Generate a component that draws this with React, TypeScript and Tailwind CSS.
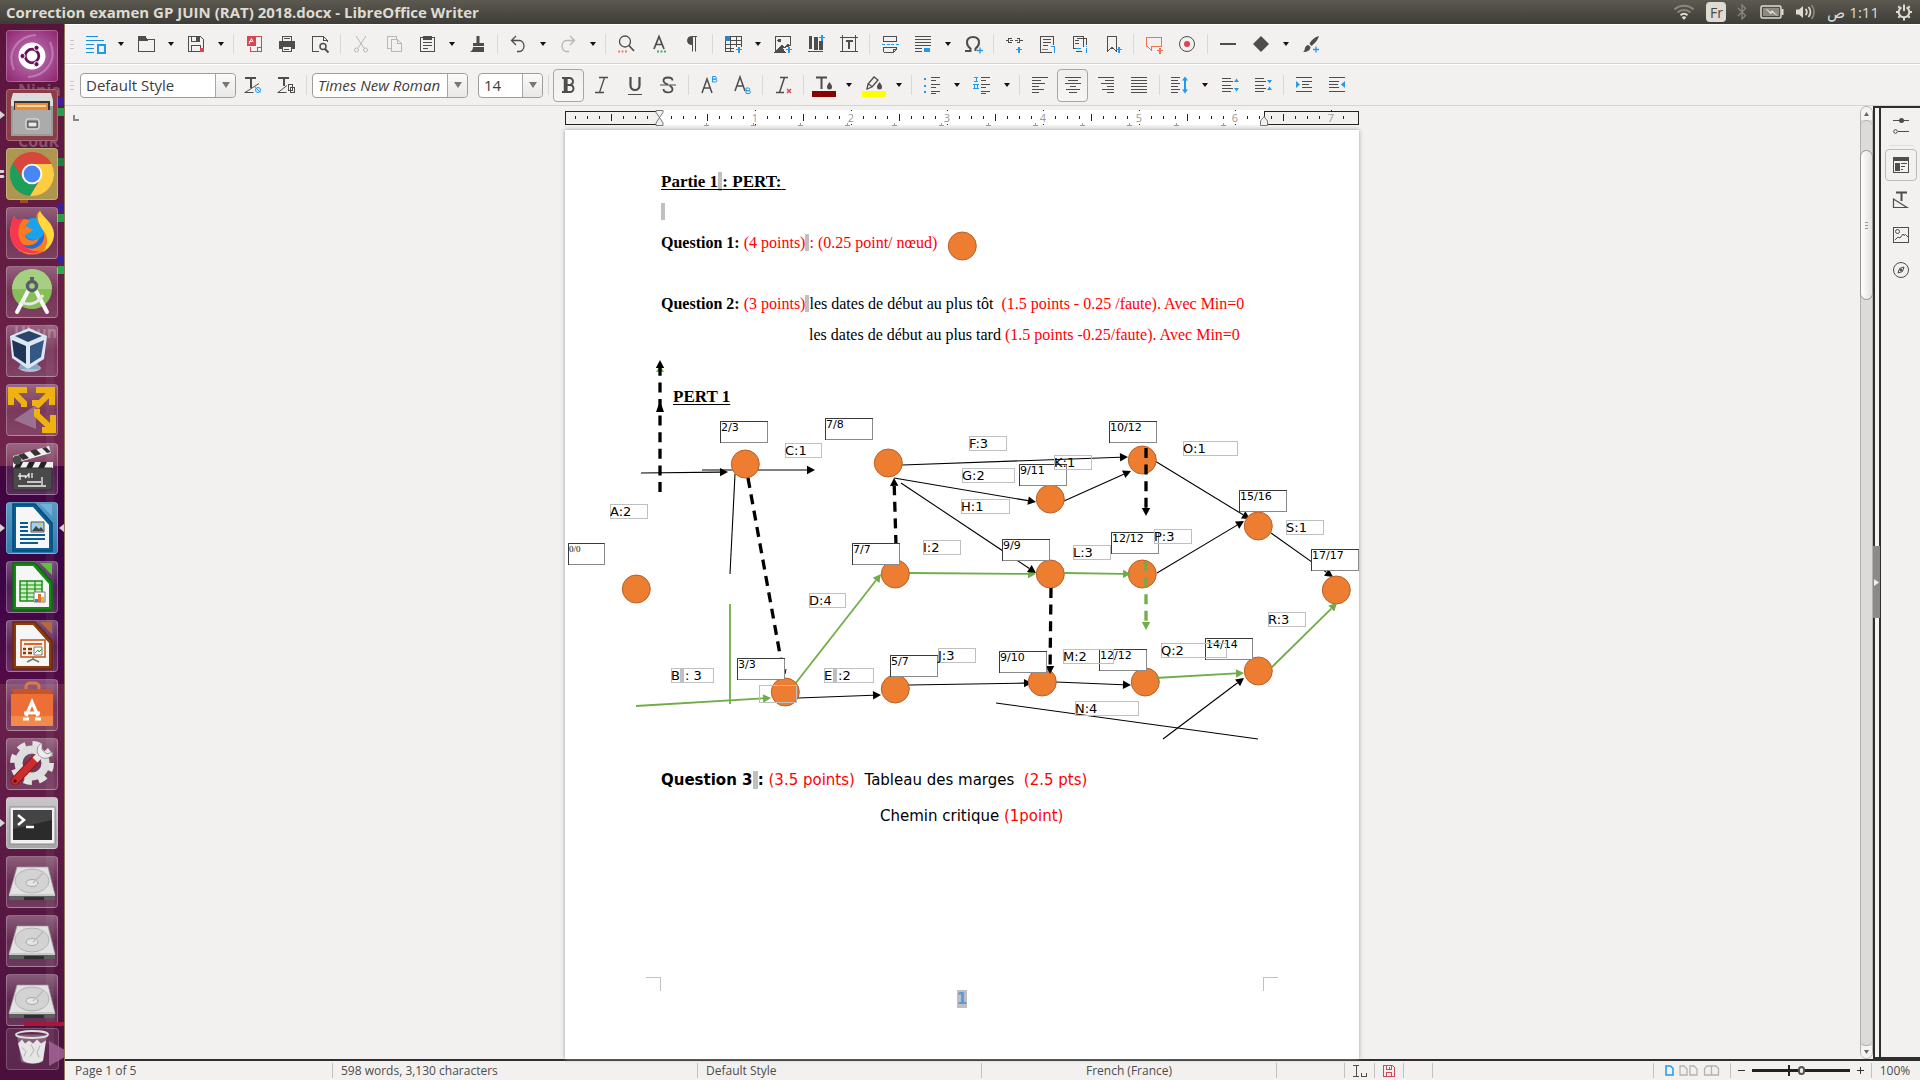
import React from "react";

const INK = "#4d4d4d";
const BLUE = "#1e9bf0";
const RED = "#da4453";

/* ---------- toolbar building blocks ---------- */

function Glyph({ children, soft = false }: { children: React.ReactNode; soft?: boolean }) {
  return (
    <svg
      width="24"
      height="24"
      viewBox="0 0 24 24"
      fill="none"
      stroke={INK}
      shapeRendering={soft ? "auto" : "crispEdges"}
      aria-hidden="true"
    >
      {children}
    </svg>
  );
}

function Tool({
  label,
  children,
  soft,
  active,
  disabled,
}: {
  label: string;
  children: React.ReactNode;
  soft?: boolean;
  active?: boolean;
  disabled?: boolean;
}) {
  return (
    <button
      type="button"
      aria-label={label}
      disabled={disabled}
      className="flex h-9 w-[33px] shrink-0 items-center justify-center disabled:opacity-35"
    >
      <span
        className={
          active
            ? "flex h-[33px] w-[31px] items-center justify-center rounded border border-[#a8a6a3] bg-linear-to-b from-[#f0efed] to-[#f7f6f5]"
            : "flex h-[33px] w-[31px] items-center justify-center"
        }
      >
        <Glyph soft={soft}>{children}</Glyph>
      </span>
    </button>
  );
}

function Drop({ label }: { label: string }) {
  return (
    <button type="button" aria-label={label} className="flex h-9 w-[17px] shrink-0 items-center justify-center">
      <svg width="6" height="4" viewBox="0 0 6 4" aria-hidden="true">
        <path d="M0 0h6L3 4z" fill="#111" />
      </svg>
    </button>
  );
}

function Sep() {
  return (
    <div className="flex w-2 shrink-0 justify-center">
      <div className="h-5 w-px bg-[#dad8d6]" />
    </div>
  );
}

function Grip() {
  return (
    <div className="flex w-[14px] shrink-0 flex-col items-center gap-[3px]">
      <div className="h-px w-1 bg-[#c9c7c4]" />
      <div className="h-px w-1 bg-[#c9c7c4]" />
      <div className="h-px w-1 bg-[#c9c7c4]" />
    </div>
  );
}

function Combo({ label, value, size, italic }: { label: string; value: string; size: string; italic?: boolean }) {
  return (
    <div className={"relative flex h-[25px] shrink-0 rounded border border-[#9f9d9a] bg-white " + size}>
      <select
        aria-label={label}
        defaultValue={value}
        className={
          "h-full w-full appearance-none rounded bg-transparent pl-[5px] text-[15px] text-[#3c3c3c] outline-none " +
          (italic ? "italic" : "")
        }
      >
        <option>{value}</option>
      </select>
      <div className="pointer-events-none absolute inset-y-0 right-0 flex w-5 items-center justify-center rounded-r border-l border-[#a9a7a4] bg-linear-to-b from-[#fbfafa] to-[#eae8e6]">
        <svg width="8" height="6" viewBox="0 0 8 6" aria-hidden="true">
          <path d="M0 0h8L4 6z" fill="#777" />
        </svg>
      </div>
    </div>
  );
}

/* ---------- top panel ---------- */

function TopBar() {
  return (
    <header className="flex h-6 shrink-0 items-center bg-linear-to-b from-[#5c5a50] to-[#3d3c37] pl-[6px] text-[#dfdbd2]">
      <h1 className="text-[15px] leading-6 font-bold">Correction examen GP JUIN (RAT) 2018.docx - LibreOffice Writer</h1>
      <div className="ml-auto flex items-center pr-[7px]">
        <svg width="22" height="18" viewBox="0 0 22 18" fill="none" strokeWidth="2" aria-label="Wi-Fi">
          <path d="M1.500 6.500a14 14 0 0 1 19 0" stroke="#8b887f" />
          <path d="M4.500 9.500a9.500 9.500 0 0 1 13 0" stroke="#8b887f" />
          <path d="M7.500 12.300a5 5 0 0 1 7 0" stroke="#dfdbd2" />
          <path d="M8.700 14.300a3.500 3.500 0 0 1 4.600 0L11 17z" fill="#dfdbd2" />
        </svg>
        <span className="ml-[11px] flex h-5 w-5 items-center justify-center rounded-sm bg-[#dfdbd2] text-[14px] text-[#4a4843]">Fr</span>
        <svg className="ml-[11px]" width="10" height="18" viewBox="0 0 10 18" fill="none" stroke="#89867d" strokeWidth="1.300" aria-label="Bluetooth">
          <path d="M1 5l7.500 7.500L5 16V2l3.500 3.500L1 13" />
        </svg>
        <svg className="ml-[13px]" width="24" height="14" viewBox="0 0 24 14" aria-label="Battery">
          <rect x="1" y="1" width="20" height="12" rx="1.500" fill="none" stroke="#dfdbd2" strokeWidth="1.500" />
          <rect x="21.500" y="4" width="2" height="6" fill="#dfdbd2" />
          <rect x="3" y="3" width="16" height="8" fill="#8d8a80" />
          <path d="M6 4l5 3.500 1-2 5 5-5-3.500-1 2z" fill="#f4f1ea" stroke="#f4f1ea" strokeWidth=".4" />
        </svg>
        <svg className="ml-[11px]" width="21" height="18" viewBox="0 0 21 18" fill="none" strokeWidth="1.800" aria-label="Volume">
          <path d="M1 6.500h3l4-3.500v12l-4-3.500H1z" fill="#dfdbd2" />
          <path d="M10.500 6a4 4 0 0 1 0 6M13.500 4a7.500 7.500 0 0 1 0 10" stroke="#dfdbd2" />
          <path d="M16.500 2a11 11 0 0 1 0 14" stroke="#87847b" />
        </svg>
        <time dir="rtl" className="ml-[11px] text-[15px] leading-6">
          1:11 ص
        </time>
        <svg className="ml-4" width="18" height="18" viewBox="0 0 18 18" fill="none" stroke="#dfdbd2" aria-label="Session">
          <path d="M6.500 4.300a5.300 5.300 0 1 0 5 0" strokeWidth="2" />
          <path d="M9 1.500V8" strokeWidth="2" />
          <path d="M1 9h2M15 9h2M3.300 14.700l1.400-1.400M14.700 14.700l-1.400-1.400M9 15v2.500M3.300 3.300l1.500 1.500M14.700 3.300l-1.500 1.500" strokeWidth="2" />
        </svg>
      </div>
    </header>
  );
}

/* ---------- launcher ---------- */

function Tile({
  name,
  tone,
  left,
  right,
  children,
}: {
  name: string;
  tone: string;
  left?: "one" | "two";
  right?: boolean;
  children: React.ReactNode;
}) {
  return (
    <div className="relative">
      <button
        type="button"
        aria-label={name}
        className={"block h-[52px] w-[52px] overflow-hidden rounded border border-white/25 " + tone}
      >
        <svg width="50" height="50" viewBox="1 1 50 50" aria-hidden="true">
          {children}
        </svg>
      </button>
      {left === "one" && (
        <svg className="absolute top-[22px] -left-[6px]" width="5" height="8" viewBox="0 0 5 8" aria-hidden="true">
          <path d="M0 0l5 4-5 4z" fill="#d8d4d6" />
        </svg>
      )}
      {left === "two" && (
        <svg className="absolute top-[22px] -left-[6px]" width="5" height="8" viewBox="0 0 5 8" aria-hidden="true">
          <path d="M0 0h3.500l1 1.500-1 1.500H0zM0 5h3.500l1 1.500-1 1.500H0z" fill="#d8d4d6" />
        </svg>
      )}
      {right && (
        <svg className="absolute top-[22px] -right-[6px]" width="5" height="8" viewBox="0 0 5 8" aria-hidden="true">
          <path d="M5 0L0 4l5 4z" fill="#d8d4d6" />
        </svg>
      )}
    </div>
  );
}

const GLASS = "bg-linear-to-b from-white/30 via-white/10 to-white/15";

function DocShape({ dark, mid, light }: { dark: string; mid: string; light: string }) {
  return (
    <>
      <path d="M7 2h22l17 19v28H7z" fill={mid} stroke={dark} strokeWidth="1.500" />
      <path d="M10 5h17l16 18v23H10z" fill="#f6f6f6" />
      <path d="M34 2h12v12z" fill={light} />
    </>
  );
}

function Disk() {
  return (
    <>
      <path d="M11 11h31l7 28H3z" fill="#e2e2e2" stroke="#9b9b9b" strokeWidth=".7" />
      <ellipse cx="26" cy="25" rx="17" ry="12" fill="#d3d3d3" stroke="#b4b4b4" />
      <ellipse cx="26" cy="27" rx="6" ry="3.500" fill="#e4e4e4" stroke="#a8a8a8" />
      <path d="M27 27l10-10" stroke="#bbb" strokeWidth="1.500" />
      <path d="M3 38h46v6H3z" fill="#5e5e5e" />
      <path d="M3 38h46v2H3z" fill="#c9c9c9" />
      <path d="M18 41h20v3H18z" fill="#2f2f2f" />
    </>
  );
}

const GHOSTS = [
  { word: "The", place: "top-0 left-4 text-[22px] text-white/20" },
  { word: "Ninja", place: "top-[54px] left-[18px] text-[16px] text-white/25" },
  { word: "CouR", place: "top-[105px] left-[18px] text-[16px] text-white/25" },
  { word: "Ubun", place: "top-[296px] left-[14px] text-[16px] text-white/25" },
];

const STREAKS = [
  "top-[73px] bg-[#3d1f9c]",
  "top-[84px] bg-[#25a04a]",
  "top-[134px] bg-[#257a3f]",
  "top-[180px] bg-[#3d1f9c]",
  "top-[190px] bg-[#25a04a]",
  "top-[232px] bg-[#3d1f9c]",
  "top-[242px] bg-[#2ea84e]",
];

function Launcher() {
  return (
    <nav
      aria-label="Launcher"
      className="relative flex w-[65px] shrink-0 flex-col items-center overflow-hidden bg-linear-to-b from-[#5a143c] via-[#74284f] to-[#4a0f3c] pr-px"
    >
      <div aria-hidden="true" className="absolute inset-0">
        <div className="absolute inset-x-0 top-[442px] h-[218px] bg-linear-to-b from-[#420540] via-[#3b0446] to-[#520b46]" />
        <div className="absolute top-[300px] left-[46px] h-[720px] w-2 bg-white/5" />
        {STREAKS.map((s) => (
          <div key={s} className={"absolute right-0 h-2 w-2 " + s} />
        ))}
        <div className="absolute top-[163px] left-5 h-4 w-2 bg-[#b3661f]/70" />
        <div className="absolute top-[212px] left-[18px] h-4 w-2 bg-[#8c1690]" />
        {GHOSTS.map((g) => (
          <span key={g.word} className={"absolute font-bold " + g.place}>
            {g.word}
          </span>
        ))}
      </div>

      <div className="relative mt-[6px] flex flex-col gap-[7px]">
        <Tile name="Search your computer" tone="bg-radial from-[#c07ab8] to-[#8d2371]">
          <path d="M8 40C0 22 12 6 30 5M44 12c8 18-4 34-22 35" stroke="#cf9bcb" strokeWidth="2" fill="none" opacity=".6" />
          <circle cx="26" cy="26" r="13.500" fill="#fff" />
          <circle cx="26" cy="26" r="6.800" fill="none" stroke="#6d1058" strokeWidth="2.800" />
          <circle cx="16.500" cy="26" r="2.600" fill="#6d1058" stroke="#fff" />
          <circle cx="30.500" cy="17.800" r="2.600" fill="#6d1058" stroke="#fff" />
          <circle cx="30.500" cy="34.200" r="2.600" fill="#6d1058" stroke="#fff" />
        </Tile>
        <Tile name="Files" tone="bg-[#8b3d48]" left="one">
          <path d="M7 4h38l2 7v6H5v-6z" fill="#dcdcdc" />
          <path d="M8 12h36v9H8z" fill="#3b3634" />
          <path d="M9 14h33v7H9z" fill="#e98a35" />
          <path d="M11 16h29v2H11z" fill="#fbd9a8" />
          <path d="M5 17h3v4h36v-4h3v30H5z" fill="#9b9b9b" />
          <path d="M7 21h38v24H7z" fill="#ababab" />
          <rect x="20" y="30" width="13" height="10" rx="2" fill="#8d8d8d" stroke="#eee" />
          <rect x="22" y="33" width="9" height="5" fill="#e8e8e8" stroke="#444" />
        </Tile>
        <Tile name="Google Chrome" tone="bg-[#ad9650]" left="two">
          <circle cx="26" cy="26" r="22" fill="#dd4b3e" />
          <path d="M26 26L7 15a22 22 0 0 0 17 33l9-16z" fill="#1c9f5b" />
          <path d="M26 16h19.600A22 22 0 0 1 24 48l10.500-17z" fill="#ffcd42" />
          <path d="M7 15l10 16 9-15h19.500A22 22 0 0 0 7 15z" fill="#d9463b" />
          <circle cx="26" cy="26" r="10.300" fill="#fff" />
          <circle cx="26" cy="26" r="8.400" fill="#4687f4" />
        </Tile>
        <Tile name="Firefox" tone={GLASS}>
          <circle cx="26" cy="28" r="17" fill="#1d6fd8" />
          <circle cx="28" cy="22" r="11" fill="#1aa3ec" />
          <path d="M8 9c1 3 3 4 5 4 4-2 8-1 11 1l-5 5c4 1 6 4 8 3-1 4-8 4-8 7 2 5 10 6 14 2-2 8-14 10-19 4 5 10 22 9 24-5 1-7-4-10-7-17-2-5 1-8 3-9 3 7 13 11 14 23a22 22 0 0 1-43 5C3 24 5 16 8 9z" fill="#fb7a22" />
          <path d="M8 9c1 3 3 4 5 4 2-1 4-1 5-1-6 5-7 14-4 21 4 9 14 13 22 11-12 6-27 0-31-12C3 24 5 16 8 9z" fill="#f6384e" />
          <path d="M34 4c3 7 13 11 14 23 0 7-4 14-11 18 6-8 5-16 0-22-5-7-7-14-3-19z" fill="#ffd83e" />
        </Tile>
        <Tile name="Android Studio" tone={GLASS}>
          <circle cx="26" cy="23" r="20" fill="#86bf57" />
          <path d="M6 23a20 20 0 0 1 40 0z" fill="#a6cf82" />
          <path d="M22 25L11 46M30 25l11 21" stroke="#f7f7f7" strokeWidth="4" strokeLinecap="round" />
          <path d="M15 36c8 4 16 2 22-7" stroke="#e8e8e8" strokeWidth="3" fill="none" />
          <circle cx="26" cy="20" r="4.500" fill="none" stroke="#57606a" strokeWidth="3.500" />
          <path d="M24 11h4v4h-4z" fill="#57606a" />
        </Tile>
        <Tile name="VirtualBox" tone={GLASS}>
          <ellipse cx="24" cy="43" rx="11" ry="4" fill="#a9bdd6" />
          <path d="M15 38h16l3 6H12z" fill="#8ba3c3" />
          <path d="M4 11L23 3l18 8-3 23-16 10L6 33z" fill="#dbe7f5" />
          <path d="M9 11l14-5 13 5-14 6z" fill="#2c4468" />
          <path d="M6 15l14 6v18L8 31z" fill="#1d3557" />
          <path d="M24 21l14-6-3 17-11 7z" fill="#355785" />
        </Tile>
        <Tile name="VMware" tone={GLASS}>
          <path d="M8 36l22-15v24z" fill="#a888aa" opacity=".7" />
          <path d="M21 6H5v15M6 7l12 12v4M30 6h16v15M46 7L30 23M26 19h8M36 46h11V31M46 45L31 31v-6" fill="none" stroke="#efb310" strokeWidth="6" />
        </Tile>
        <Tile name="OpenShot" tone={GLASS}>
          <path d="M7 13L43 3l2 7L9 20z" fill="#f0f0f0" />
          <path d="M12 12l5 5 6-2-5-5zM24 8l5 5 6-2-5-5zM36 5l5 5 4-1-5-5z" fill="#333" />
          <path d="M7 19h40v6H7z" fill="#f0f0f0" />
          <path d="M11 19h6l-3 6H8zM23 19h6l-3 6h-6zM35 19h6l-3 6h-6z" fill="#222" />
          <circle cx="11" cy="17" r="4.500" fill="#4a4a4a" />
          <path d="M7 25h39v22H7z" fill="#4a4a4a" stroke="#303030" />
          <path d="M12 33h8M14 30v7M19 35l4-4M23 30v5M26 30v5M21 39h14M36 34v8M12 43h28" stroke="#eee" strokeWidth="1.300" fill="none" />
        </Tile>
        <Tile name="LibreOffice Writer" tone="bg-linear-to-b from-[#5a9cc4] to-[#2f7cae]" left="one" right>
          <DocShape dark="#064a78" mid="#0a5d94" light="#6fb2dc" />
          <path d="M14 21h8M14 25h8M14 29h8M14 33h25M14 37h25M14 41h18" stroke="#0a5d94" strokeWidth="2" />
          <path d="M25 20h13v10H25z" fill="#9cd3f2" stroke="#555" />
          <path d="M26 29l4-5 3 3 2-2 3 4z" fill="#444" />
          <circle cx="34" cy="22" r="1.500" fill="#f5c32c" />
        </Tile>
        <Tile name="LibreOffice Calc" tone={GLASS}>
          <DocShape dark="#0c6b0c" mid="#158a12" light="#5bc23a" />
          <path d="M14 20h22v20H14z" fill="#c9f0c0" stroke="#1b8a17" strokeWidth="1.500" />
          <path d="M14 24h22M14 28h22M14 32h22M14 36h22M21 20v20M29 20v20" stroke="#1b8a17" strokeWidth="1.200" />
          <path d="M28 31h11v10H28z" fill="#fff" stroke="#777" />
          <path d="M29 38h3v3h-3z" fill="#2f86d6" />
          <path d="M32 33h3v8h-3z" fill="#e0702c" />
          <path d="M35 36h3v5h-3z" fill="#f2b21c" />
        </Tile>
        <Tile name="LibreOffice Impress" tone={GLASS}>
          <DocShape dark="#6b2a08" mid="#8a3c0e" light="#b56a3c" />
          <path d="M15 20h24v17H15z" fill="#fff4ea" stroke="#c2531a" strokeWidth="1.500" />
          <path d="M18 24h18" stroke="#d9652a" strokeWidth="2" />
          <path d="M17 29h3M17 33h3M22 29h4M22 33h4" stroke="#8a3c0e" strokeWidth="2.500" />
          <path d="M28 27h8v8h-8z" fill="#fff" stroke="#777" />
          <path d="M29 33l3-3 1 2 3-3" stroke="#2a9a2a" fill="none" />
          <path d="M27 37v3M27 39l-6 3M27 39l6 3" stroke="#777" strokeWidth="1.500" />
        </Tile>
        <Tile name="Ubuntu Software" tone={GLASS}>
          <path d="M20 16V8a4 4 0 0 1 4-4h5a4 4 0 0 1 4 4v8" stroke="#dd7a4a" strokeWidth="3" fill="none" />
          <path d="M5 10h42l-3 6H8z" fill="#c8542a" />
          <path d="M5 15h42v32H5z" fill="#ee6f35" />
          <path d="M5 37h42v10H5z" fill="#f28a4c" />
          <path d="M20 37l6-14 6 14M18 34h16M17 40h6M29 40h6" stroke="#fff" strokeWidth="3.200" fill="none" />
        </Tile>
        <Tile name="System Settings" tone={GLASS}>
          <circle cx="26" cy="25" r="19" fill="none" stroke="#e3e3e3" strokeWidth="6" strokeDasharray="8 6.900" />
          <circle cx="26" cy="25" r="13.500" fill="none" stroke="#dedede" strokeWidth="8" />
          <path d="M9 43l21-22" stroke="#8f1515" strokeWidth="9" strokeLinecap="round" />
          <path d="M9 43l21-22" stroke="#cc2c2c" strokeWidth="7" strokeLinecap="round" />
          <path d="M29 22l6-6" stroke="#e8e8e8" strokeWidth="7" />
          <path d="M36 5a8 8 0 1 0 11 9l-6 2-5-4z" fill="#ededed" stroke="#888" strokeWidth=".8" />
          <circle cx="9" cy="43" r="1.800" fill="#5b0c0c" />
        </Tile>
        <Tile name="Terminal" tone="bg-linear-to-b from-[#c9c5c8] to-[#a9a4a8]" left="one">
          <path d="M4 10h45v37H4z" fill="#f1f1f1" stroke="#888" />
          <path d="M7 13h39v30H7z" fill="#2b2b2b" />
          <path d="M7 13h39v10L7 32z" fill="#444" />
          <path d="M12 18l6 5-6 5" stroke="#fff" strokeWidth="2.500" fill="none" />
          <path d="M20 30h8" stroke="#fff" strokeWidth="2.500" />
        </Tile>
        <Tile name="Volume 1" tone={GLASS}>
          <Disk />
        </Tile>
        <Tile name="Volume 2" tone={GLASS}>
          <Disk />
        </Tile>
        <Tile name="Volume 3" tone={GLASS}>
          <Disk />
        </Tile>
      </div>

      <div aria-hidden="true" className="absolute right-0 bottom-[54px] h-1 w-[41px] bg-[#a3183c]" />
      <button
        type="button"
        aria-label="Trash"
        className="relative mt-[2px] h-[42px] w-[53px] rounded border border-white/20 bg-white/10"
      >
        <svg width="51" height="40" viewBox="0 0 51 39" aria-hidden="true">
          <path d="M10 5l4 27c4 3 18 3 22 0l4-27z" fill="#cfcfcf" opacity=".35" />
          <path d="M11 14l4-4 3 4 4-3 4 3 4-4 4 4 5-3-3 20c-4 4-16 4-20 0z" fill="#e6e6e6" />
          <path d="M15 18l4 4-2 5M24 15l3 6-4 6M33 16l-3 7 2 5" stroke="#b3b3b3" fill="none" />
          <ellipse cx="25" cy="5" rx="16" ry="3.500" fill="none" stroke="#e0dfe0" strokeWidth="1.800" />
        </svg>
      </button>
      <svg className="absolute right-0 bottom-[14px]" width="16" height="25" viewBox="0 0 16 25" aria-hidden="true">
        <path d="M0 0l16 9v7L0 25z" fill="#a8689a" opacity=".8" />
      </svg>
      <div aria-hidden="true" className="absolute inset-y-0 right-0 w-px bg-[#8f7a5c]" />
    </nav>
  );
}

/* ---------- toolbars ---------- */

function Plus({ x, y, c = BLUE }: { x: number; y: number; c?: string }) {
  return <path d={`M${x - 3} ${y + 0.5}h6M${x} ${y - 2.5}v6`} stroke={c} strokeWidth="1.300" />;
}

function StandardBar() {
  return (
    <div role="toolbar" aria-label="Standard" className="flex h-10 shrink-0 items-center border-t border-b border-t-white border-b-[#d6d4d2]">
      <Grip />
      <Tool label="Styles sidebar">
        <path d="M2 4.500h12M2 8.500h18M2 12.500h8M2 16.500h8M2 20.500h8" stroke="#1b8fdc" />
        <path d="M13.500 12.500h7v8h-7z" stroke={BLUE} strokeWidth="2" />
      </Tool>
      <Drop label="Styles options" />
      <Tool label="Open">
        <path d="M4.500 4.500h6l2 3h8v12h-16z" />
        <path d="M4 4h7l2 4H4z" fill={INK} />
      </Tool>
      <Drop label="Open recent" />
      <Tool label="Save">
        <path d="M4.500 4.500h12l3 3v12h-15zM7.500 4.500v5h8v-5M7.500 19.500v-6h9v6" />
        <path d="M12 5h3v4h-3z" fill={INK} />
        <circle cx="18" cy="18" r="2.500" fill={RED} stroke="none" />
      </Tool>
      <Drop label="Save options" />
      <Sep />
      <Tool label="Export as PDF">
        <path d="M5 4h9v10H5z" fill={RED} stroke="none" />
        <path d="M14 4.500h5.500v15h-11v-5M15.500 19v-4h4" stroke={RED} />
        <path d="M7 12l2.500-5.500L11 10M7 9.500h3" stroke="#fff" shapeRendering="auto" />
      </Tool>
      <Tool label="Print">
        <path d="M4 9h16v8h-3v-3H7v3H4z" fill={INK} stroke="none" />
        <path d="M7.500 9V4.500h9V9M7.500 14.500h9v5h-9zM9 6.500h6M9 17.500h5" />
      </Tool>
      <Tool label="Print preview">
        <path d="M19.500 10V8.500l-4-4h-11v15H11M15.500 4.500v4h4" />
        <circle cx="15" cy="14.500" r="3" strokeWidth="1.500" shapeRendering="auto" />
        <path d="M17 17l3.500 3.500" strokeWidth="2" shapeRendering="auto" />
      </Tool>
      <Sep />
      <Tool label="Cut" disabled soft>
        <path d="M7 4l8 12M17 4L9 16" />
        <circle cx="7.500" cy="18" r="2" />
        <circle cx="16.500" cy="18" r="2" />
      </Tool>
      <Tool label="Copy" disabled>
        <path d="M8.500 16.500h-3v-12h9v2M9.500 7.500h6l4 4v8h-10zM15.500 7.500v4h4" />
      </Tool>
      <Tool label="Paste">
        <path d="M5.500 5.500h14v14h-14z" strokeWidth="1.500" />
        <path d="M8 4h9v4H8z" fill={INK} stroke="none" />
        <path d="M8 10.500h9M8 13.500h9M8 16.500h5" />
      </Tool>
      <Drop label="Paste special" />
      <Tool label="Clone formatting" soft>
        <path d="M11.500 4h3v7h4.500v3H8v-3h3.500z" fill={INK} stroke="none" />
        <path d="M8 15h11v5H5c2-1 3-3 3-5z" fill={INK} stroke="none" />
      </Tool>
      <Sep />
      <Tool label="Undo" soft>
        <path d="M6 8.500h7.500a4.500 5.500 0 0 1 0 11H11M10 4L5.500 8.500 10 13" strokeWidth="1.300" />
      </Tool>
      <Drop label="Undo list" />
      <Tool label="Redo" disabled soft>
        <path d="M18 8.500h-7.500a4.500 5.500 0 0 0 0 11H13M14 4l4.500 4.500L14 13" strokeWidth="1.300" />
      </Tool>
      <Drop label="Redo list" />
      <Sep />
      <Tool label="Find and replace" soft>
        <circle cx="11" cy="9.500" r="5.500" strokeWidth="1.300" />
        <path d="M15 13.500l5 5.500" strokeWidth="1.700" />
        <path d="M4 19.500h9" stroke="#f0805f" strokeWidth="2" strokeDasharray="2 1.500" />
      </Tool>
      <Tool label="Spelling" soft>
        <path d="M7 17l5-12.500L17 17M8.500 12.500h7" strokeWidth="1.700" />
        <path d="M10 19.500h10" stroke="#3fae6a" strokeWidth="2" strokeDasharray="2 1.500" />
      </Tool>
      <Tool label="Formatting marks" soft>
        <path d="M12 4.500h5M12.500 4.500v15M15.500 4.500v15" />
        <path d="M12.500 4.500h-1a4 4 0 0 0 0 8h1z" fill={INK} />
      </Tool>
      <Sep />
      <Tool label="Insert table">
        <path d="M4.500 4.500h16v10M4.500 4.500v15h8M4.500 8.500h16M4.500 12.500h16M4.500 16.500h8M9.500 4.500v15M15.500 4.500v10" />
        <path d="M4 4h5v5H4z" fill="#2f7fc4" stroke="none" />
        <Plus x={18} y={17} />
      </Tool>
      <Drop label="Table size" />
      <Tool label="Insert image">
        <path d="M4.500 19.500v-15h15v9" />
        <path d="M5 19l6-6 3 3 3-4 2 2" fill={INK} />
        <path d="M4 20h10l-4-5z" fill={INK} />
        <circle cx="8.500" cy="8.500" r="1.500" fill={INK} />
        <Plus x={18} y={17} />
      </Tool>
      <Tool label="Insert chart">
        <path d="M4 19.500h15" />
        <path d="M5.500 4.500h2v12h-2zM10 5h3v12h-3zM15 9h3v8h-3z" fill={INK} />
        <Plus x={18} y={5} />
      </Tool>
      <Tool label="Insert text box">
        <path d="M5.500 5.500h13v14h-13zM3 5.500h3M18 5.500h3M3 19.500h3M18 19.500h3M5.500 3v3M18.500 3v3" />
        <path d="M8.500 9h7M12 9v8" strokeWidth="2" />
      </Tool>
      <Sep />
      <Tool label="Insert page break">
        <path d="M5.500 4v5.500h13V4M5 4.500h14M5.500 20V15.500h13v2l-3 3h-10M15.500 20v-3h3" />
        <path d="M4 12.500h17" stroke={BLUE} strokeDasharray="3 1.500" />
      </Tool>
      <Tool label="Insert field">
        <path d="M4 4.500h16M4 7.500h16M4 10.500h16M4 13.500h16M4 16.500h7M4 19.500h7" />
        <path d="M13 16h6v4h-6z" fill={BLUE} stroke="none" />
      </Tool>
      <Drop label="Field types" />
      <Tool label="Special character" soft>
        <path d="M4 19h5.500v-2.500C6.500 14.500 6 12.500 6 10.500c0-3.500 2.500-5.500 6-5.500s6 2 6 5.500c0 2-.5 4-3.500 6V19" strokeWidth="2" />
        <Plus x={19} y={18} />
      </Tool>
      <Sep />
      <Tool label="Insert hyperlink">
        <path d="M4 8.500h3M9.500 6.500h-3v4h3M8 8.500h3M13 8.500h3M14.500 6.500h3v4h-3M17 8.500h4" />
        <Plus x={17} y={17} />
      </Tool>
      <Tool label="Insert footnote">
        <path d="M16.500 20.500h-11v-16h13v8M8 7.500h8M8 10.500h8M8 13.500h5" />
        <path d="M7 17.500h6M16 14.500h3v6" stroke={BLUE} />
      </Tool>
      <Tool label="Insert endnote">
        <path d="M8.500 16.500h-3v-12h10v10M9 6.500h9.500v6M8 19.500h6M7 8.500h4M7 11.500h4" />
        <path d="M8 16.500h5M18.500 14v1M18.500 16v5" stroke={BLUE} />
      </Tool>
      <Tool label="Insert bookmark">
        <path d="M6.500 4.500h9v15l-4.500-4-4.500 4z" />
        <Plus x={18} y={17} />
      </Tool>
      <Sep />
      <Tool label="Insert comment">
        <path d="M4.500 5.500h15v9h-10v4l-4-4h-1z" stroke="#f0704f" strokeWidth="1.200" />
        <Plus x={18} y={18} c="#f0704f" />
      </Tool>
      <Tool label="Track changes" soft>
        <circle cx="12" cy="12" r="7.500" />
        <circle cx="12" cy="12" r="3" fill={RED} stroke="none" />
      </Tool>
      <Sep />
      <Tool label="Insert line">
        <path d="M4 12h16" strokeWidth="2" />
      </Tool>
      <Tool label="Basic shapes" soft>
        <path d="M12 4l8 8-8 8-8-8z" fill={INK} stroke="none" />
      </Tool>
      <Drop label="Shape list" />
      <Tool label="Show draw functions" soft>
        <path d="M20 4c-4 1-8 4-9.500 8l2 2C16 11 19 8 20 4zM9.500 13l2 2c0 3-3 5-7.500 5 1.500-1 1.500-2 2-4 .5-2 2-3 3.500-3z" fill={INK} stroke="none" />
        <Plus x={17} y={17} />
      </Tool>
    </div>
  );
}

function FormattingBar() {
  return (
    <div role="toolbar" aria-label="Formatting" className="flex h-[42px] shrink-0 items-center border-t border-b border-t-white border-b-[#d6d4d2]">
      <Grip />
      <div className="ml-px flex items-center">
        <Combo label="Paragraph style" value="Default Style" size="w-[156px]" />
      </div>
      <Tool label="Update style">
        <path d="M4 5h11M9.500 5v10" strokeWidth="2" />
        <path d="M3.500 19.500h9M4 19.500l14-9" shapeRendering="auto" />
        <circle cx="17" cy="17" r="2.500" stroke={BLUE} shapeRendering="auto" />
        <path d="M14 14l5.500 5.500" stroke={BLUE} shapeRendering="auto" />
      </Tool>
      <Tool label="New style">
        <path d="M4 5h11M9.500 5v8" strokeWidth="2" />
        <path d="M3.500 19.500h9M4 19.500l9-7" shapeRendering="auto" />
        <path d="M14.500 11.500h4v6h-4zM16.500 14.500h4v5h-4z" />
      </Tool>
      <Sep />
      <div className="ml-[2px] flex items-center gap-[10px] pr-px">
        <Combo label="Font name" value="Times New Roman" size="w-[156px]" italic />
        <Combo label="Font size" value="14" size="w-[65px]" />
      </div>
      <Sep />
      <Tool label="Bold" active soft>
        <path d="M5 5h7.500a3.500 3.500 0 0 1 0 7H9M9 12h4a3.500 3.500 0 0 1 0 7H5M5 19h4M9.500 5v14" strokeWidth="2" />
        <path d="M8.500 5v14" strokeWidth="3.500" />
      </Tool>
      <Tool label="Italic" soft>
        <path d="M9 4.500h9M5 19.500h9M14.500 4.500l-5 15" strokeWidth="1.300" />
      </Tool>
      <Tool label="Underline">
        <path d="M7.500 4v8.500a4.500 4.500 0 0 0 9 0V4" strokeWidth="2.200" shapeRendering="auto" />
        <path d="M5 21.500h14" />
      </Tool>
      <Tool label="Strikethrough" soft>
        <path d="M16.500 7.500c0-4-9-4-9 0 0 2 1.500 3 4.500 4M7.500 16c0 4.500 9 4.500 9 .5 0-2-1-3-3-4" strokeWidth="1.800" />
        <path d="M4 12h16" />
      </Tool>
      <Sep />
      <Tool label="Superscript" soft>
        <path d="M5 20l5-14 5 14M7 15h6.500" strokeWidth="1.500" />
        <path d="M15.500 3.500H18a1.300 1.300 0 0 1 0 2.700h-2.500zM15.500 6.200h3a1.400 1.400 0 0 1 0 2.800h-3z" stroke={BLUE} />
      </Tool>
      <Tool label="Subscript" soft>
        <path d="M5 18l5-14 5 14M7 13h6.500" strokeWidth="1.500" />
        <path d="M16 15h2.500a1.300 1.300 0 0 1 0 2.700H16zM16 17.700h3a1.400 1.400 0 0 1 0 2.800h-3z" stroke={BLUE} />
      </Tool>
      <Sep />
      <Tool label="Clear formatting" soft>
        <path d="M9 4.500h8M5 19.500h8M13.500 4.500l-5 15" strokeWidth="1.500" />
        <path d="M16 16l4 4M20 16l-4 4" stroke={RED} strokeWidth="1.500" />
      </Tool>
      <Sep />
      <Tool label="Font color" soft>
        <path d="M4 4.500h11M9.500 4.500V16" strokeWidth="2" />
        <path d="M17.500 9c1.500 2 2.500 3.500 2.500 5a2.500 2.500 0 0 1-5 0c0-1.500 1-3 2.500-5z" fill={INK} stroke="none" />
        <path d="M0 18h24v6H0z" fill="#8b0000" stroke="none" />
      </Tool>
      <Drop label="Font color list" />
      <Tool label="Highlighting" soft>
        <path d="M5 16l1-5 6-7 4 3-6 7zM6.500 11l4 3" strokeWidth="1.300" />
        <path d="M17.500 9c1.500 2 2.500 3.500 2.500 5a2.500 2.500 0 0 1-5 0c0-1.500 1-3 2.500-5z" fill={INK} stroke="none" />
        <path d="M0 18h24v6H0z" fill="#ffff00" stroke="none" />
      </Tool>
      <Drop label="Highlighting list" />
      <Sep />
      <Tool label="Bullets">
        <path d="M11 4.500h9M11 7.500h5M11 11.500h9M11 14.500h5M11 18.500h9M11 20.500h5" />
        <path d="M4 5h2v2H4zM4 12h2v2H4zM4 18h2v2H4z" fill={BLUE} stroke="none" />
      </Tool>
      <Drop label="Bullet types" />
      <Tool label="Numbering">
        <path d="M11 4.500h9M11 7.500h5M11 11.500h9M11 14.500h5M11 18.500h9M11 20.500h5" />
        <path d="M4 4.500h4M4 8.500h4M6 4v5M3 11.500h6M3 15.500h6M4.500 11v5M7.500 11v5" stroke={BLUE} />
      </Tool>
      <Drop label="Numbering types" />
      <Sep />
      <Tool label="Align left">
        <path d="M4 4.500h16M4 7.500h9M4 10.500h13M4 13.500h7M4 16.500h12M4 19.500h7" />
      </Tool>
      <Tool label="Center" active>
        <path d="M4 4.500h16M7 7.500h10M4 10.500h16M9 13.500h6M5 16.500h14M8 19.500h8" />
      </Tool>
      <Tool label="Align right">
        <path d="M4 4.500h16M11 7.500h9M7 10.500h13M13 13.500h7M8 16.500h12M13 19.500h7" />
      </Tool>
      <Tool label="Justify">
        <path d="M4 4.500h16M4 7.500h16M4 10.500h16M4 13.500h16M4 16.500h16M4 19.500h16" />
      </Tool>
      <Sep />
      <Tool label="Line spacing" soft>
        <path d="M3 4.500h9M3 7.500h7M3 10.500h9M3 13.500h7M3 16.500h9M3 19.500h7" shapeRendering="crispEdges" />
        <path d="M17 6v12" stroke={BLUE} strokeWidth="2" />
        <path d="M14 7.500h6L17 3.500zM14 16.500h6l-3 4z" fill={BLUE} stroke="none" />
      </Tool>
      <Drop label="Line spacing list" />
      <Tool label="Increase paragraph spacing" soft>
        <path d="M4 5.500h9M4 8.500h11M4 12.500h9M4 15.500h11M4 18.500h9" shapeRendering="crispEdges" />
        <path d="M16 9h5l-2.500-3.500zM16 15h5l-2.500 3.500z" fill={BLUE} stroke="none" />
      </Tool>
      <Tool label="Decrease paragraph spacing" soft>
        <path d="M4 5.500h9M4 8.500h11M4 12.500h9M4 15.500h11M4 18.500h9" shapeRendering="crispEdges" />
        <path d="M16 7h5l-2.500 3.500zM16 17h5l-2.500-3.500z" fill={BLUE} stroke="none" />
      </Tool>
      <Sep />
      <Tool label="Increase indent" soft>
        <path d="M4 4.500h16M10 8.500h10M10 11.500h7M10 14.500h10M4 18.500h16" shapeRendering="crispEdges" />
        <path d="M4 8v7l4-3.500z" fill={BLUE} stroke="none" />
      </Tool>
      <Tool label="Decrease indent" soft>
        <path d="M4 4.500h16M4 8.500h10M4 11.500h9M4 14.500h10M4 18.500h16" shapeRendering="crispEdges" />
        <path d="M20 8v7l-4-3.500z" fill={BLUE} stroke="none" />
      </Tool>
    </div>
  );
}

/* ---------- ruler ---------- */

function Ruler() {
  const ticks: React.ReactNode[] = [];
  for (let i = -7; i <= 57; i++) {
    const x = 94 + i * 12;
    if (i === 0 || i % 8 === 0) continue;
    const big = i % 4 === 0;
    ticks.push(<path key={i} d={big ? `M${x}.5 4v7` : `M${x}.5 6v3`} stroke="#222" />);
  }
  const stops = Array.from({ length: 12 }, (_, i) => 141 + i * 47);
  return (
    <svg className="mx-auto block shrink-0" width="794" height="18" viewBox="0 0 794 18" shapeRendering="crispEdges" aria-label="Ruler">
      <path d="M95 0h604v15H95z" fill="#fff" />
      <path d="M94 1H.5v13.500H94M699 1h94.500v13.500H699V1" fill="none" stroke="#222" strokeWidth="1" />
      {ticks}
      {stops.map((x) => (
        <path key={x} d={`M${x - 2} 15.500h5M${x + 0.5} 12.500v3`} stroke="#999" />
      ))}
      {[1, 2, 3, 4, 5, 6, 7].map((n) => (
        <g key={n}>
          <path d={`M${94.5 + n * 96} 0v1M${94.5 + n * 96} 14v1`} stroke="#222" />
          <text x={94 + n * 96} y="12" textAnchor="middle" fontSize="11" fill="#999">
            {n}
          </text>
        </g>
      ))}
      <g fill="#f2f1ef" stroke="#777" shapeRendering="auto">
        <path d="M91 .5h7v2L94.500 7.500 91 2.500zM91 15.500h7V13L94.500 7.500 91 13z" />
        <path d="M695.500 15.500h7V11L699 6.500 695.500 11z" />
      </g>
    </svg>
  );
}

/* ---------- PERT network drawing ---------- */

type Edge = { p: [number, number, number, number]; green?: boolean; head?: boolean };

const EDGES: Edge[] = [
  { p: [641, 473, 728, 472], head: true },
  { p: [702, 470, 815, 470], head: true },
  { p: [735, 474, 730, 574] },
  { p: [730, 604, 730, 704], green: true },
  { p: [636, 706, 771, 698], green: true, head: true },
  { p: [798, 698, 881, 695], head: true },
  { p: [795, 684, 881, 574], green: true, head: true },
  { p: [909, 573, 1036, 574], green: true, head: true },
  { p: [902, 465, 1128, 457], head: true },
  { p: [894, 478, 1036, 502], head: true },
  { p: [901, 483, 1036, 573], head: true },
  { p: [1064, 501, 1131, 471], head: true },
  { p: [1155, 461, 1250, 519], head: true },
  { p: [1157, 573, 1244, 521], head: true },
  { p: [1271, 533, 1333, 577], head: true },
  { p: [909, 685, 1032, 683], head: true },
  { p: [1056, 682, 1131, 685], head: true },
  { p: [1163, 739, 1244, 678], head: true },
  { p: [996, 703, 1258, 739] },
];

const TOP_EDGES: Edge[] = [
  { p: [1064, 573, 1131, 574], green: true, head: true },
  { p: [1155, 678, 1244, 673], green: true, head: true },
  { p: [1271, 668, 1337, 603], green: true, head: true },
];

const DASHES: Edge[] = [
  { p: [660, 492, 660, 360], head: true },
  { p: [748, 478, 781, 660] },
  { p: [896, 545, 894, 478], head: true },
  { p: [1146, 448, 1146, 516], head: true },
  { p: [1146, 561, 1146, 630], head: true, green: true },
  { p: [1051, 588, 1050, 674], head: true },
];

const NODES: [number, number][] = [
  [962, 246],
  [745, 464],
  [888, 463],
  [636, 589],
  [895, 574],
  [785, 692],
  [895, 689],
  [1050, 499],
  [1142, 460],
  [1258, 526],
  [1050, 574],
  [1142, 574],
  [1336, 590],
  [1042, 682],
  [1145, 682],
  [1258, 671],
];

const DATES: [string, number, number][] = [
  ["2/3", 720, 421],
  ["7/8", 825, 418],
  ["7/7", 852, 543],
  ["3/3", 737, 658],
  ["5/7", 890, 655],
  ["10/12", 1109, 421],
  ["9/11", 1019, 464],
  ["9/9", 1002, 539],
  ["12/12", 1111, 532],
  ["15/16", 1239, 490],
  ["17/17", 1311, 549],
  ["9/10", 999, 651],
  ["12/12", 1099, 649],
  ["14/14", 1205, 638],
];

const TASKS: [string, number, number, number][] = [
  ["A:2", 610, 504, 37],
  ["C:1", 785, 443, 36],
  ["D:4", 809, 593, 36],
  ["I:2", 923, 540, 37],
  ["J:3", 938, 648, 37],
  ["F:3", 969, 436, 37],
  ["G:2", 962, 468, 52],
  ["H:1", 961, 499, 48],
  ["K:1", 1054, 455, 37],
  ["O:1", 1183, 441, 54],
  ["P:3", 1154, 529, 37],
  ["L:3", 1073, 545, 37],
  ["S:1", 1286, 520, 37],
  ["R:3", 1268, 612, 37],
  ["Q:2", 1161, 643, 65],
  ["M:2", 1063, 649, 50],
  ["N:4", 1075, 701, 63],
];

function Arrow({ edge, thick }: { edge: Edge; thick?: boolean }) {
  const [x1, y1, x2, y2] = edge.p;
  const len = Math.hypot(x2 - x1, y2 - y1);
  const ux = (x2 - x1) / len;
  const uy = (y2 - y1) / len;
  const size = edge.head ? 8 : 0;
  const bx = x2 - ux * size;
  const by = y2 - uy * size;
  const color = edge.green ? "#70ad47" : "#000";
  return (
    <g>
      <path
        d={`M${x1} ${y1}L${bx} ${by}`}
        stroke={color}
        strokeWidth={thick ? 3.3 : edge.green ? 1.8 : 1.1}
        strokeDasharray={thick ? "10 6.600" : undefined}
      />
      {edge.head && (
        <path d={`M${x2} ${y2}L${bx - uy * 4.2} ${by + ux * 4.2}L${bx + uy * 4.2} ${by - ux * 4.2}z`} fill={color} />
      )}
    </g>
  );
}

function Network() {
  return (
    <svg
      className="pointer-events-none absolute top-0 left-0 font-['DejaVu_Sans']"
      width="794"
      height="929"
      viewBox="565 130 794 929"
      fill="none"
      role="img"
      aria-label="PERT network"
    >
      {EDGES.map((e) => (
        <Arrow key={e.p.join()} edge={e} />
      ))}
      {NODES.map(([x, y]) => (
        <circle key={x + "-" + y} cx={x + 0.3} cy={y} r="14" fill="#ed7d31" stroke="#b9622a" />
      ))}
      {TOP_EDGES.map((e) => (
        <Arrow key={e.p.join()} edge={e} />
      ))}
      <path d="M656 372l4-7 4 7z" fill="#6fc23a" />
      {DASHES.map((e) => (
        <Arrow key={e.p.join()} edge={e} thick />
      ))}
      <path d="M656 412l4-11 4 11z" fill="#000" />
      <path d="M786 669l-1 5" stroke="#000" />

      {DATES.map(([t, x, y]) => (
        <g key={t + x}>
          <rect x={x + 0.5} y={y + 0.5} width="47" height="21" fill="#fff" stroke="#8a8a8a" />
          <path d={`M${x + 0.5} ${y + 22}V${y + 0.5}h47.500`} stroke="#3a3a3a" />
          <text x={x + 1} y={y + 10} fontSize="11" fill="#000">
            {t}
          </text>
        </g>
      ))}
      <rect x="568.500" y="543.500" width="36" height="21" fill="#fff" stroke="#8a8a8a" />
      <path d="M568.500 565v-21.500h36" stroke="#3a3a3a" />
      <text className="font-['Liberation_Serif']" x="569" y="552" fontSize="9" fill="#000">
        0/0
      </text>

      {TASKS.map(([t, x, y, w]) => (
        <g key={t}>
          <rect x={x + 0.5} y={y + 0.5} width={w} height="14" stroke="#bfbfbf" />
          <text x={x} y={y + 12} fontSize="13" fill="#000">
            {t}
          </text>
        </g>
      ))}
      <rect x="671.500" y="668.500" width="42" height="14" stroke="#bfbfbf" />
      <rect x="680" y="669" width="4" height="14" fill="#bfbfbf" />
      <text x="671" y="680" fontSize="13" fill="#000">B</text>
      <text x="685" y="680" fontSize="13" fill="#000">: 3</text>
      <rect x="824.500" y="668.500" width="49" height="14" stroke="#bfbfbf" />
      <rect x="833" y="669" width="4" height="14" fill="#bfbfbf" />
      <text x="824" y="680" fontSize="13" fill="#000">E</text>
      <text x="838" y="680" fontSize="13" fill="#000">:2</text>
      <rect x="759.500" y="685.500" width="37" height="17" stroke="#bfbfbf" />
    </svg>
  );
}

/* ---------- document page ---------- */

function Nbsp() {
  return <span className="bg-[#c0c0c0]">&nbsp;</span>;
}

function Page() {
  return (
    <article
      contentEditable
      suppressContentEditableWarning
      spellCheck={false}
      aria-label="Document"
      className="relative mx-auto min-h-0 w-[794px] flex-1 overflow-hidden bg-white px-24 pt-9 font-['Liberation_Serif'] text-[16px] leading-[31px] whitespace-pre text-black shadow-[0_0_4px_#999] outline-none"
    >
      <Network />
      <p className="text-[17px] font-bold underline underline-offset-2">
        Partie 1<Nbsp />: PERT:{" "}
      </p>
      <p className="leading-[30px]">
        <Nbsp />
      </p>
      <p className="text-[#ff0000]">
        <b className="text-black">Question 1:</b> (4 points)
        <Nbsp />: (0.25 point/ nœud)
      </p>
      <p className="leading-[30px]">&nbsp;</p>
      <p className="text-[#ff0000]">
        <b className="text-black">Question 2:</b> (3 points)
        <Nbsp />
        <span className="text-black">les dates de début au plus tôt  </span>(1.5 points - 0.25 /faute). Avec Min=0
      </p>
      <p className="pl-[148px] text-[#ff0000]">
        <span className="text-black">les dates de début au plus tard </span>(1.5 points -0.25/faute). Avec Min=0
      </p>
      <p>&nbsp;</p>
      <p className="pl-3 text-[17px] font-bold underline underline-offset-2">PERT 1</p>
      <div className="mt-[350px] font-['DejaVu_Sans'] text-[15px] leading-9">
        <p className="text-[#ff0000]">
          <b className="text-black">
            Question 3<Nbsp />:
          </b>{" "}
          (3.5 points)  <span className="text-black">Tableau des marges</span>  (2.5 pts)
        </p>
        <p className="pl-[219px] text-[#ff0000]">
          <span className="text-black">Chemin critique </span>(1point)
        </p>
      </div>
      <div className="-mx-[15px] mt-[143px] flex justify-between">
        <div className="h-[14px] w-[15px] border-t border-r border-[#c0c0c0]" />
        <div className="h-[14px] w-[15px] border-t border-l border-[#c0c0c0]" />
      </div>
      <p className="text-center font-['DejaVu_Sans'] text-[15px] leading-[17px] font-bold text-[#5b9bd5]">
        <span className="bg-[#c0c0c0]">1</span>
      </p>
    </article>
  );
}

/* ---------- scroll bar and side bar ---------- */

function ScrollBar() {
  return (
    <div
      role="scrollbar"
      aria-label="Vertical scroll"
      aria-controls="page-area"
      aria-valuenow={5}
      className="flex w-[13px] shrink-0 flex-col rounded-full border border-[#b3b1ad] bg-[#dddbd9]"
    >
      <button type="button" aria-label="Scroll up" className="flex h-[13px] items-center justify-center rounded-t-full bg-[#f5f4f3]">
        <svg width="5" height="4" viewBox="0 0 5 4" aria-hidden="true">
          <path d="M0 4h5L2.500 0z" fill="#666" />
        </svg>
      </button>
      <div className="h-[30px] rounded-t-full border-t border-[#b3b1ad]" />
      <div className="-mx-px flex h-[150px] flex-col items-center justify-center gap-[2px] rounded-full border border-[#96948f] bg-linear-to-r from-white to-[#e4e2e0]">
        <div className="h-px w-[3px] bg-[#999]" />
        <div className="h-px w-[3px] bg-[#999]" />
        <div className="h-px w-[3px] bg-[#999]" />
      </div>
      <div className="flex-1 rounded-b-full border-b border-[#b3b1ad]" />
      <button type="button" aria-label="Scroll down" className="flex h-3 items-center justify-center rounded-b-full bg-[#f5f4f3]">
        <svg width="5" height="4" viewBox="0 0 5 4" aria-hidden="true">
          <path d="M0 0h5L2.500 4z" fill="#666" />
        </svg>
      </button>
    </div>
  );
}

function SideBar() {
  const slot = "flex h-8 w-8 items-center justify-center rounded";
  return (
    <aside className="flex w-[47px] shrink-0 border-t-2 border-b-2 border-[#2e2e2e]">
      <div className="relative w-2 shrink-0 border-x-2 border-[#2e2e2e] bg-[#f5f4f3]">
        <button
          type="button"
          aria-label="Hide sidebar"
          className="absolute top-[438px] -right-px -left-[2px] flex h-[72px] items-center justify-center bg-[#8a8a8a]"
        >
          <svg width="5" height="7" viewBox="0 0 5 7" aria-hidden="true">
            <path d="M0 0l5 3.500L0 7z" fill="#eee" />
          </svg>
        </button>
      </div>
      <div className="flex flex-1 flex-col items-center gap-[3px] pt-[2px]">
        <button type="button" aria-label="Sidebar settings" className={slot}>
          <Glyph soft>
            <path d="M4 6.500h16M9 17.500h11" strokeWidth="1.200" />
            <circle cx="12.500" cy="6.500" r="2.500" fill={INK} stroke="none" />
            <circle cx="6.500" cy="17.500" r="1.800" />
          </Glyph>
        </button>
        <div className="h-px w-6 bg-[#dddbd9]" />
        <button type="button" aria-label="Properties" className={slot + " border border-[#bdbbb8]"}>
          <Glyph>
            <path d="M4.500 4.500h15v15h-15z" />
            <path d="M4 4h16v4H4zM6 10h5v8H6z" fill={INK} stroke="none" />
            <path d="M12 10.500h6M12 13.500h4M12 16.500h2" />
          </Glyph>
        </button>
        <button type="button" aria-label="Styles" className={slot}>
          <Glyph soft>
            <path d="M7 4.500h11M12.500 4.500V13" strokeWidth="2" />
            <path d="M4.500 11v8.500H18z" strokeWidth="1.200" />
          </Glyph>
        </button>
        <button type="button" aria-label="Gallery" className={slot}>
          <Glyph soft>
            <path d="M4.500 4.500h15v15h-15z" shapeRendering="crispEdges" />
            <circle cx="8.500" cy="8.500" r="2" />
            <path d="M6 17l3-3 2 1 3-4 1 1.500 1.500-1L19 14" />
          </Glyph>
        </button>
        <button type="button" aria-label="Navigator" className={slot}>
          <Glyph soft>
            <circle cx="12" cy="12" r="7.500" />
            <path d="M15 9l-1.500 4.500L9 15l1.500-4.500z" />
            <circle cx="12" cy="12" r="1" fill={INK} />
          </Glyph>
        </button>
      </div>
    </aside>
  );
}

/* ---------- status bar ---------- */

function StatusBar() {
  const cell = "flex h-[15px] shrink-0 items-center border-r border-[#c3c1be]";
  return (
    <footer className="flex h-[21px] shrink-0 items-center border-t-2 border-[#2e2e2e] text-[12px] text-[#4c4c4c]">
      <div className={cell + " w-[268px] pl-[10px]"}>Page 1 of 5</div>
      <div className={cell + " w-[365px] pl-2"}>598 words, 3,130 characters</div>
      <div className={cell + " w-[284px] pl-2"}>Default Style</div>
      <div className={cell + " w-[295px] justify-center"}>French (France)</div>
      <div className={cell + " w-[68px]"} />
      <div className={cell + " w-[30px] justify-center"}>
        <svg width="16" height="14" viewBox="0 0 16 14" fill="none" stroke="#4c4c4c" shapeRendering="crispEdges" aria-label="Insert mode">
          <path d="M1 1.500h6M4 1.500v11M1 12.500h6M9.500 9v3.500h5V9" />
        </svg>
      </div>
      <div className={cell + " w-[29px] justify-center"}>
        <svg width="12" height="12" viewBox="0 0 12 12" fill="none" stroke={RED} shapeRendering="crispEdges" aria-label="Document modified">
          <path d="M.5.5h9l2 2v9H.500zM3.500.5v4h5v-4M3.500 11.500v-4h5v4M6.500 2v2" strokeWidth="1.200" />
        </svg>
      </div>
      <div className={cell + " w-[29px]"} />
      <div className={cell + " min-w-0 flex-1"} />
      <div className={cell + " w-[77px] justify-center gap-[5px]"}>
        <svg width="9" height="11" viewBox="0 0 9 11" fill="none" stroke={BLUE} strokeWidth="1.500" aria-label="Single-page view">
          <path d="M1 1h4.500L8 3.500V10H1z" />
        </svg>
        <svg width="19" height="11" viewBox="0 0 19 11" fill="none" stroke="#b3b3b3" strokeWidth="1.300" aria-label="Multiple-page view">
          <path d="M1 1h4l3 3v6H1zM11 1h4l3 3v6h-7z" />
        </svg>
        <svg width="17" height="11" viewBox="0 0 17 11" fill="none" stroke="#b3b3b3" strokeWidth="1.300" aria-label="Book view">
          <path d="M8.500 1v9h-7V3.500L4 1zM8.500 1H13l2.500 2.500V10h-7z" />
        </svg>
      </div>
      <div className={cell + " w-[141px] justify-center gap-[6px]"}>
        <button type="button" aria-label="Zoom out" className="flex h-3 w-[9px] items-center justify-center">
          <span className="h-px w-[7px] bg-[#333]" />
        </button>
        <div className="relative flex h-[15px] w-[98px] items-center">
          <div className="h-[3px] w-full bg-[#222]" />
          <div className="absolute left-9 h-[11px] w-[2px] bg-[#222]" />
          <input
            type="range"
            aria-label="Zoom"
            min="0"
            max="100"
            defaultValue="50"
            className="absolute inset-0 h-[15px] w-full appearance-none bg-transparent [&::-webkit-slider-thumb]:h-[9px] [&::-webkit-slider-thumb]:w-[7px] [&::-webkit-slider-thumb]:appearance-none [&::-webkit-slider-thumb]:rounded-full [&::-webkit-slider-thumb]:border-2 [&::-webkit-slider-thumb]:border-[#555] [&::-webkit-slider-thumb]:bg-[#eee]"
          />
        </div>
        <button type="button" aria-label="Zoom in" className="flex h-3 w-[9px] items-center justify-center">
          <svg width="7" height="7" viewBox="0 0 7 7" stroke="#333" shapeRendering="crispEdges" aria-hidden="true">
            <path d="M0 3.500h7M3.500 0v7" />
          </svg>
        </button>
      </div>
      <div className="w-12 shrink-0 pr-[2px] text-center">100%</div>
    </footer>
  );
}

export default function App() {
  return (
    <div className="flex h-screen flex-col overflow-hidden bg-[#f2f1ef] font-['Open_Sans',sans-serif]">
      <TopBar />
      <div className="flex min-h-0 flex-1">
        <Launcher />
        <main className="flex min-w-0 flex-1 flex-col">
          <StandardBar />
          <FormattingBar />
          <div className="flex min-h-0 flex-1">
            <section id="page-area" className="relative flex min-w-0 flex-1 flex-col pt-1 pr-px">
              <svg className="absolute top-[9px] left-2" width="6" height="6" viewBox="0 0 6 6" aria-hidden="true">
                <path d="M1 0v5h5" fill="none" stroke="#888" strokeWidth="2" />
              </svg>
              <div className="flex h-5 shrink-0">
                <Ruler />
              </div>
              <Page />
            </section>
            <ScrollBar />
            <SideBar />
          </div>
          <StatusBar />
        </main>
      </div>
    </div>
  );
}
